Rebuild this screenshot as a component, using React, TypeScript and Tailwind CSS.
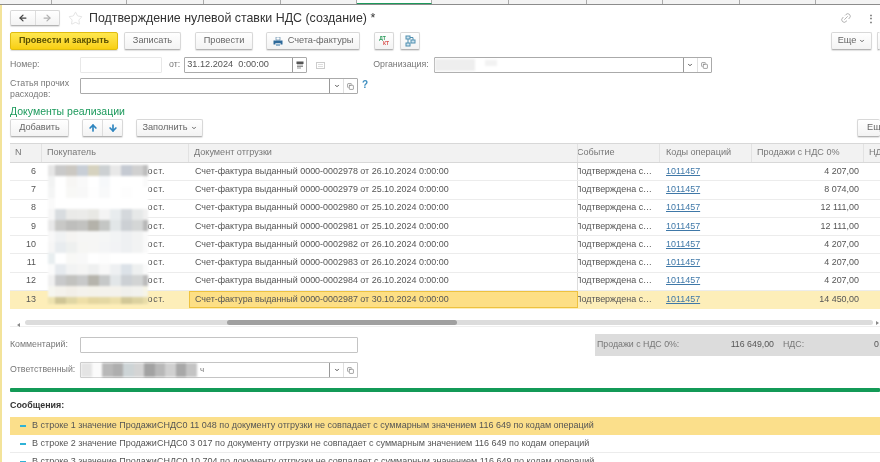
import { ArrowLeft, ArrowRight, Star, Link2, ArrowUp, ArrowDown, ChevronDown, Copy } from "lucide-react";

const rows = [
  { n: 6, doc: "0000-0002978 от 26.10.2024", sum: "4 207,00" },
  { n: 7, doc: "0000-0002979 от 25.10.2024", sum: "8 074,00" },
  { n: 8, doc: "0000-0002980 от 25.10.2024", sum: "12 111,00" },
  { n: 9, doc: "0000-0002981 от 25.10.2024", sum: "12 111,00" },
  { n: 10, doc: "0000-0002982 от 26.10.2024", sum: "4 207,00" },
  { n: 11, doc: "0000-0002983 от 26.10.2024", sum: "4 207,00" },
  { n: 12, doc: "0000-0002984 от 26.10.2024", sum: "4 207,00" },
  { n: 13, doc: "0000-0002987 от 30.10.2024", sum: "14 450,00" },
];

const messages = [
  { n: 1, a: "11 048" },
  { n: 2, a: "3 017" },
  { n: 3, a: "10 704" },
];

// замазанные покупатели, как на скриншоте
const mosaic = [
  "#e6e6e6 #c9c9c9 #cbc8c2 #c8ced6 #d6d2bf #ccd0d2 #e8e8e8 #c5cad2 #d0d0d0 #bdbdbd",
  "#f2f3f3 #ffffff #f7f6f4 #f9f9f9 #ffffff #f6f8fa #ffffff #ffffff #ffffff #fafafa",
  "#f4f5f5 #ffffff #f8f8f6 #f8f8f8 #fefefe #f8f9fa #ffffff #fdfdfd #ffffff #ffffff",
  "#fafafa #ffffff #ffffff #ffffff #ffffff #ffffff #ffffff #ffffff #ffffff #ffffff",
  "#f6f6f6 #d8dcdf #eaeae8 #ebebe9 #e8e8e4 #f4f4f4 #e8ecee #d4d8dc #e6e8e8 #f0f0f0",
  "#e8e8e8 #c8c8c6 #bebebc #c2c2c0 #b4b2aa #c4c6c4 #e2e6e8 #ccd0d4 #d4d6d6 #b8b8b8",
  "#f8f8f8 #f0f2f3 #f5f4f2 #f6f6f5 #f6f6f5 #f5f6f6 #f2f4f5 #eef0f2 #f2f3f3 #fafafa",
  "#f6f6f6 #e8ecef #eef0ef #f6f6f4 #f6f6f5 #f4f5f6 #f2f3f5 #eef0f2 #f2f3f3 #fafafa",
  "#e8eef0 #ffffff #f8f8f6 #f8f8f8 #ffffff #fdfdfd #ffffff #ffffff #ffffff #ffffff",
  "#fbfbfb #e6eaee #f2f3f3 #f5f5f4 #eff0f0 #f8f8f8 #eef0f2 #dce2e8 #eef0f0 #fafafa",
  "#f0f0f0 #c8c9ca #c2c2bf #c8c9c9 #b6b4ac #c6c8c8 #e2e6e8 #ccd0d4 #d2d4d4 #bbbbbb",
  "#f6f6f0 #f4f2ec #f2efe8 #f4f2ec #f4f2ea #f4f2ec #f4f2ec #f0f0ec #f2f2ee #f6f4e8",
  "#eee3b0 #cfc596 #e0d6a4 #eedfa8 #e4d6a0 #e4d8a4 #ecdfaa #d2c898 #dcd2a0 #e8dca8",
].flatMap((r) => r.split(" "));

const respMosaic = "#e4e4e4 #fbfbfb #b8b8b8 #aeaeae #cdd4d6 #d4d4d4 #a2a2a2 #b8b8b8 #d0d0d0 #a8a8a8 #c4c4c4".split(" ");

function Btn({ children, className = "" }: { children: React.ReactNode; className?: string }) {
  return (
    <button className={`h-[18px] shrink-0 flex items-center justify-center rounded-[2px] border border-[#d8d8d8] border-b-[#b4b4b4] bg-gradient-to-b from-white to-[#f3f3f3] text-[9.2px] text-[#666] shadow-[0_1px_1px_rgba(0,0,0,0.12)] ${className}`}>
      {children}
    </button>
  );
}

function FieldEnd() {
  return (
    <>
      <span className="w-[14px] h-full flex items-center justify-center border-l border-[#999]">
        <ChevronDown size={6} strokeWidth={4} className="text-[#555]" />
      </span>
      <span className="w-[14px] h-full flex items-center justify-center border-l border-[#e0e0e0]">
        <Copy size={7} className="text-[#666]" />
      </span>
    </>
  );
}

export default function App() {
  return (
    <div className="w-[880px] h-[462px] overflow-hidden bg-white flex flex-col font-['Liberation_Sans',Arial,sans-serif] text-[#555] blur-[0.4px]">
      {/* вкладки сверху */}
      <div className="h-[5px] shrink-0 flex bg-[#f3f3f3] border-b border-[#8c8c8c]">
        <div className="w-[52px] border-r border-[#aaa]" />
        <div className="w-[75px] border-r border-[#aaa]" />
        <div className="w-[77px] border-r border-[#aaa]" />
        <div className="w-[77px] border-r border-[#aaa]" />
        <div className="w-[76px] border-r border-[#aaa]" />
        <div className="w-[75px] border-r border-[#aaa] bg-white border-b-[1.5px] border-b-[#1c9a5c]" />
        <div className="w-[77px] border-r border-[#aaa]" />
        <div className="w-[78px] border-r border-[#aaa]" />
        <div className="w-[76px] border-r border-[#aaa]" />
        <div className="w-[77px] border-r border-[#aaa]" />
        <div className="w-[76px] border-r border-[#aaa]" />
      </div>

      <div className="flex-1 min-h-0 border-l-[2px] border-[#f3e39a] pl-[8px]">
        {/* заголовок */}
        <div className="h-[22px] mt-[2px] flex items-center">
          <div className="w-[50px] h-[16px] flex rounded-[2px] border border-[#d8d8d8] border-b-[#b4b4b4] bg-gradient-to-b from-white to-[#f3f3f3] shadow-[0_1px_1px_rgba(0,0,0,0.12)]">
            <span className="flex-1 flex items-center justify-center border-r border-[#ddd]">
              <ArrowLeft size={10} strokeWidth={3} className="text-[#444]" />
            </span>
            <span className="flex-1 flex items-center justify-center">
              <ArrowRight size={10} strokeWidth={3} className="text-[#b0b0b0]" />
            </span>
          </div>
          <Star size={15} strokeWidth={1} className="ml-[8px] text-[#d4d4d4]" />
          <h1 className="ml-[6px] text-[12.4px] leading-none text-[#333] whitespace-nowrap">Подтверждение нулевой ставки НДС (создание) *</h1>
          <div className="ml-auto mr-[4px] flex items-center gap-[14px]">
            <Link2 size={12} strokeWidth={1.2} className="text-[#888] -rotate-45" />
            <span className="text-[10px] font-bold text-[#666]">⋮</span>
          </div>
        </div>

        {/* командная панель */}
        <div className="mt-[3px] h-[18px] flex items-center">
          <button className="w-[108px] h-[18px] shrink-0 rounded-[2px] border border-[#e0bc10] bg-gradient-to-b from-[#ffe84d] to-[#f8cf0c] text-[9px] font-bold text-[#5a5000] shadow-[0_1px_1px_rgba(0,0,0,0.15)]">Провести и закрыть</button>
          <Btn className="w-[57px] ml-[6px]">Записать</Btn>
          <Btn className="w-[58px] ml-[14px]">Провести</Btn>
          <Btn className="w-[94px] ml-[13px] gap-[5px]">
            <svg width="10" height="9" viewBox="0 0 10 9">
              <path d="M3 0h4v3H3z" fill="#fff" stroke="#4a7aa0" strokeWidth="0.6" />
              <path d="M0.5 3.5h9v4h-2V6h-5v1.5h-2z" fill="#2f6a9a" />
              <rect x="3" y="6.5" width="4" height="2.5" fill="#8fb2cc" />
            </svg>
            Счета-фактуры
          </Btn>
          <Btn className="w-[20px] ml-[14px] flex-col !text-[5px] leading-[5px] font-bold">
            <span className="text-[#2a9a5a] mr-[3px]">ДТ</span>
            <span className="text-[#d9534f] ml-[4px]">КТ</span>
          </Btn>
          <Btn className="w-[20px] ml-[6px]">
            <svg width="11" height="12" viewBox="0 0 11 12" fill="#cfe3ee" stroke="#4f8fb0" strokeWidth="1">
              <rect x="1" y="1" width="4" height="3" />
              <rect x="6" y="5" width="4" height="3" />
              <rect x="1" y="8" width="4" height="3" />
              <path d="M5 2.5h3v2.5M3 4v4" fill="none" />
            </svg>
          </Btn>
          <Btn className="w-[41px] ml-auto mr-[5px] gap-[3px]">Еще <ChevronDown size={6} strokeWidth={4} /></Btn>
          <Btn className="w-[3px] !border-r-0"><span /></Btn>
        </div>

        {/* номер, дата, организация */}
        <div className="mt-[7px] h-[16px] flex items-center text-[8.8px] text-[#777]">
          <span className="w-[70px] shrink-0">Номер:</span>
          <div className="w-[82px] h-[16px] shrink-0 border border-[#e8e8e8] rounded-[1px]" />
          <span className="ml-[7px]">от:</span>
          <div className="ml-[4px] w-[123px] h-[16px] shrink-0 flex items-center border border-[#aaa] rounded-[1px]">
            <span className="flex-1 pl-[2px] text-[#555] text-[9.2px] whitespace-pre">31.12.2024  0:00:00</span>
            <span className="w-[14px] h-full flex items-center justify-center border-l border-[#999]">
              <svg width="8" height="8" viewBox="0 0 8 8">
                <rect x="0.5" y="0.5" width="7" height="2.5" fill="#555" />
                <path d="M1 4h6M1 5.5h6M1 7h4" stroke="#777" strokeWidth="0.8" />
              </svg>
            </span>
          </div>
          <span className="ml-[9px] w-[9px] h-[7px] shrink-0 flex flex-col justify-center gap-[1px] border border-[#ccc] px-[1px]">
            <span className="h-[1px] bg-[#ddd]" />
            <span className="h-[1px] bg-[#ddd]" />
          </span>
          <span className="ml-[48px]">Организация:</span>
          <div className="relative ml-[5px] w-[278px] h-[16px] shrink-0 flex items-center justify-end border border-[#aaa] rounded-[1px]">
            <div className="absolute left-0 top-[1px] w-[40px] h-[12px] bg-[#eeeeee] blur-[1px]" />
            <div className="absolute left-[50px] top-[2px] w-[12px] h-[6px] bg-[#f2f2f2] blur-[1px]" />
            <FieldEnd />
          </div>
        </div>

        {/* статья расходов */}
        <div className="mt-[5px] h-[22px] flex items-start text-[8.8px] leading-[10.5px] text-[#777]">
          <span className="w-[70px] shrink-0">Статья прочих<br />расходов:</span>
          <div className="w-[278px] h-[16px] shrink-0 flex items-center justify-end border border-[#aaa] rounded-[1px]">
            <FieldEnd />
          </div>
          <span className="ml-[4px] mt-[2px] text-[10px] font-bold text-[#3f8fc0]">?</span>
        </div>

        <div className="mt-[5px] h-[13px] text-[10.5px] leading-[13px] text-[#1c9a5c]">Документы реализации</div>

        {/* панель таблицы */}
        <div className="mt-[1px] h-[18px] flex items-center">
          <Btn className="w-[59px]">Добавить</Btn>
          <div className="ml-[13px] w-[41px] h-[18px] shrink-0 flex rounded-[2px] border border-[#d8d8d8] border-b-[#b4b4b4] bg-gradient-to-b from-white to-[#f3f3f3] shadow-[0_1px_1px_rgba(0,0,0,0.12)]">
            <span className="flex-1 flex items-center justify-center border-r border-[#ddd]">
              <ArrowUp size={10} strokeWidth={4} className="text-[#2f86c0]" />
            </span>
            <span className="flex-1 flex items-center justify-center">
              <ArrowDown size={10} strokeWidth={4} className="text-[#2f86c0]" />
            </span>
          </div>
          <Btn className="w-[67px] ml-[13px] gap-[3px]">Заполнить <ChevronDown size={6} strokeWidth={4} /></Btn>
          <Btn className="w-[23px] ml-auto !justify-start pl-[9px] !border-r-0 overflow-hidden whitespace-nowrap">Еще</Btn>
        </div>

        {/* таблица */}
        <div className="relative mt-[6px] h-[184px] border-t border-[#d8d8d8] border-b border-b-[#efefef] text-[8.95px]">
          <div className="h-[19px] flex items-center bg-[#f2f2f2] border-b border-[#d8d8d8] text-[9.1px] text-[#777]">
            <div className="w-[32px] shrink-0 h-full flex items-center pl-[5px] border-r border-[#e2e2e2]">N</div>
            <div className="w-[147px] shrink-0 h-full flex items-center pl-[5px] border-r border-[#e2e2e2]">Покупатель</div>
            <div className="w-[389px] shrink-0 h-full flex items-center pl-[5px] border-r border-[#e2e2e2]">Документ отгрузки</div>
            <div className="w-[82px] shrink-0 h-full flex items-center overflow-hidden border-r border-[#e2e2e2]"><span className="-ml-[1px]">Событие</span></div>
            <div className="w-[92px] shrink-0 h-full flex items-center pl-[6px] border-r border-[#e2e2e2]">Коды операций</div>
            <div className="w-[112px] shrink-0 h-full flex items-center pl-[5px] border-r border-[#e2e2e2]">Продажи с НДС 0%</div>
            <div className="w-0 flex-1 h-full flex items-center pl-[5px] overflow-hidden whitespace-nowrap">НДС</div>
          </div>
          {rows.map((r) => {
            const active = r.n === 13;
            return (
              <div key={r.n} className={`h-[18.25px] flex items-center border-b ${active ? "bg-[#fdeeb9] border-[#fdeeb9]" : "border-[#ececec]"}`}>
                <div className="w-[32px] shrink-0 pr-[6px] text-right">{r.n}</div>
                <div className="w-[147px] shrink-0 pr-[24px] text-right tracking-[0.6px]">ост.</div>
                <div className={`w-[389px] shrink-0 h-full flex items-center pl-[6px] whitespace-nowrap ${active ? "bg-[#fddf85] outline outline-[1.5px] -outline-offset-1 outline-[#eec23f]" : "border-r-[1.5px] border-[#dcdcdc]"}`}>
                  Счет-фактура выданный {r.doc} 0:00:00
                </div>
                <div className="w-[82px] shrink-0 whitespace-nowrap overflow-hidden"><span className="block -ml-[3px]">Подтверждена с…</span></div>
                <div className="w-[92px] shrink-0 pl-[6px] text-[#3f78a8] underline">1011457</div>
                <div className="w-[112px] shrink-0 pr-[5px] text-right">{r.sum}</div>
              </div>
            );
          })}
          {/* замазка поверх колонки покупателя */}
          <div className="absolute left-[38px] top-[21px] w-[100px] h-[139px] overflow-hidden grid grid-cols-[7px_repeat(8,11px)_5px] auto-rows-[11px] blur-[0.8px]">
            {mosaic.map((c, i) => (
              <div key={i} style={{ background: c }} />
            ))}
          </div>
          {/* скролл */}
          <div className="absolute left-[7px] top-[179px] w-0 h-0 border-y-[2px] border-y-transparent border-r-[3px] border-r-[#888]" />
          <div className="absolute left-[15px] right-[7px] top-[176px] h-[5px] rounded-full bg-[#dcdcdc]">
            <div className="absolute left-[202px] w-[230px] h-full rounded-full bg-[#a0a0a0]" />
          </div>
          <div className="absolute right-[1px] top-[177px] w-0 h-0 border-y-[2px] border-y-transparent border-l-[3px] border-l-[#888]" />
        </div>

        {/* комментарий и итоги */}
        <div className="mt-[7px] h-[22px] flex items-center text-[8.8px] text-[#777]">
          <span className="w-[70px] shrink-0">Комментарий:</span>
          <div className="w-[278px] h-[16px] shrink-0 border border-[#c4c4c4] rounded-[1px]" />
          <div className="ml-[237px] flex-1 h-[22px] flex items-center bg-[#dcdcdc] pl-[2px] text-[8.8px]">
            <span className="w-[132px] shrink-0">Продажи с НДС 0%:</span>
            <span className="w-[45px] shrink-0 text-right text-[#555]">116 649,00</span>
            <span className="ml-[9px]">НДС:</span>
            <span className="ml-auto mr-[1px] text-[#555]">0</span>
          </div>
        </div>

        <div className="mt-[6px] h-[16px] flex items-center text-[8.8px] text-[#777]">
          <span className="w-[70px] shrink-0">Ответственный:</span>
          <div className="relative w-[278px] h-[16px] shrink-0 flex items-center justify-end border border-[#c4c4c4] rounded-[1px]">
            <span className="absolute left-[119px] text-[8px]">ч</span>
            <div className="absolute left-0 top-0 w-[116px] h-[14px] grid grid-cols-[repeat(11,1fr)] blur-[0.8px]">
              {respMosaic.map((c, i) => (
                <div key={i} style={{ background: c }} />
              ))}
            </div>
            <FieldEnd />
          </div>
        </div>

        <div className="mt-[10px] h-[4px] bg-[#139a57] rounded-[1px]" />

        <div className="mt-[7px] h-[12px] text-[8.9px] leading-[12px] font-bold text-[#333]">Сообщения:</div>

        {/* сообщения */}
        <div className="mt-[6px] text-[9px] text-[#555]">
          {messages.map((m) => (
            <div key={m.n} className={`h-[18px] flex items-center pl-[10px] whitespace-nowrap border-b ${m.n === 1 ? "bg-[#fbdf8b] border-[#fbdf8b]" : "border-[#ececec]"}`}>
              <span className="w-[6px] h-[2px] bg-[#2fb2d6] mr-[6px]" />
              В строке {m.n} значение ПродажиСНДС0 {m.a} по документу отгрузки не совпадает с суммарным значением 116 649 по кодам операций
            </div>
          ))}
        </div>
      </div>
    </div>
  );
}
